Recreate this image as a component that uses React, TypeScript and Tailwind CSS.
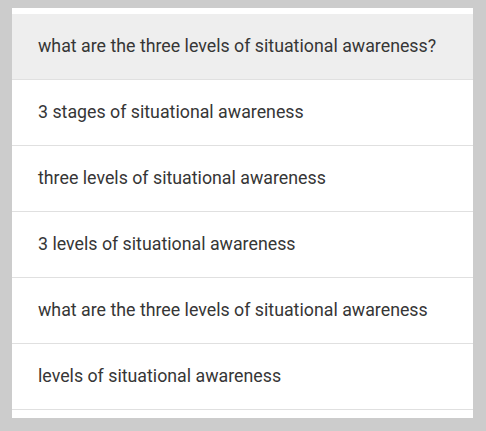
const items = [
  'what are the three levels of situational awareness?',
  '3 stages of situational awareness',
  'three levels of situational awareness',
  '3 levels of situational awareness',
  'what are the three levels of situational awareness',
  'levels of situational awareness',
]

export default function App() {
  return (
    <div className="h-[431px] w-[486px] bg-[#cccccc] pt-2 pl-3" style={{ fontFamily: 'Roboto, "Noto Sans", sans-serif' }}>
      <div className="w-[461px] bg-white pt-[6px] pb-[8px]">
        {items.map((text, i) => (
          <div
            key={i}
            className={`flex h-[66px] items-center border-b border-[#e0e0e0] pb-[1px] pl-[26px] text-[17.8px] text-[#363636] ${i === 0 ? 'bg-[#eeeeee]' : ''}`}
          >
            {text}
          </div>
        ))}
      </div>
    </div>
  )
}
